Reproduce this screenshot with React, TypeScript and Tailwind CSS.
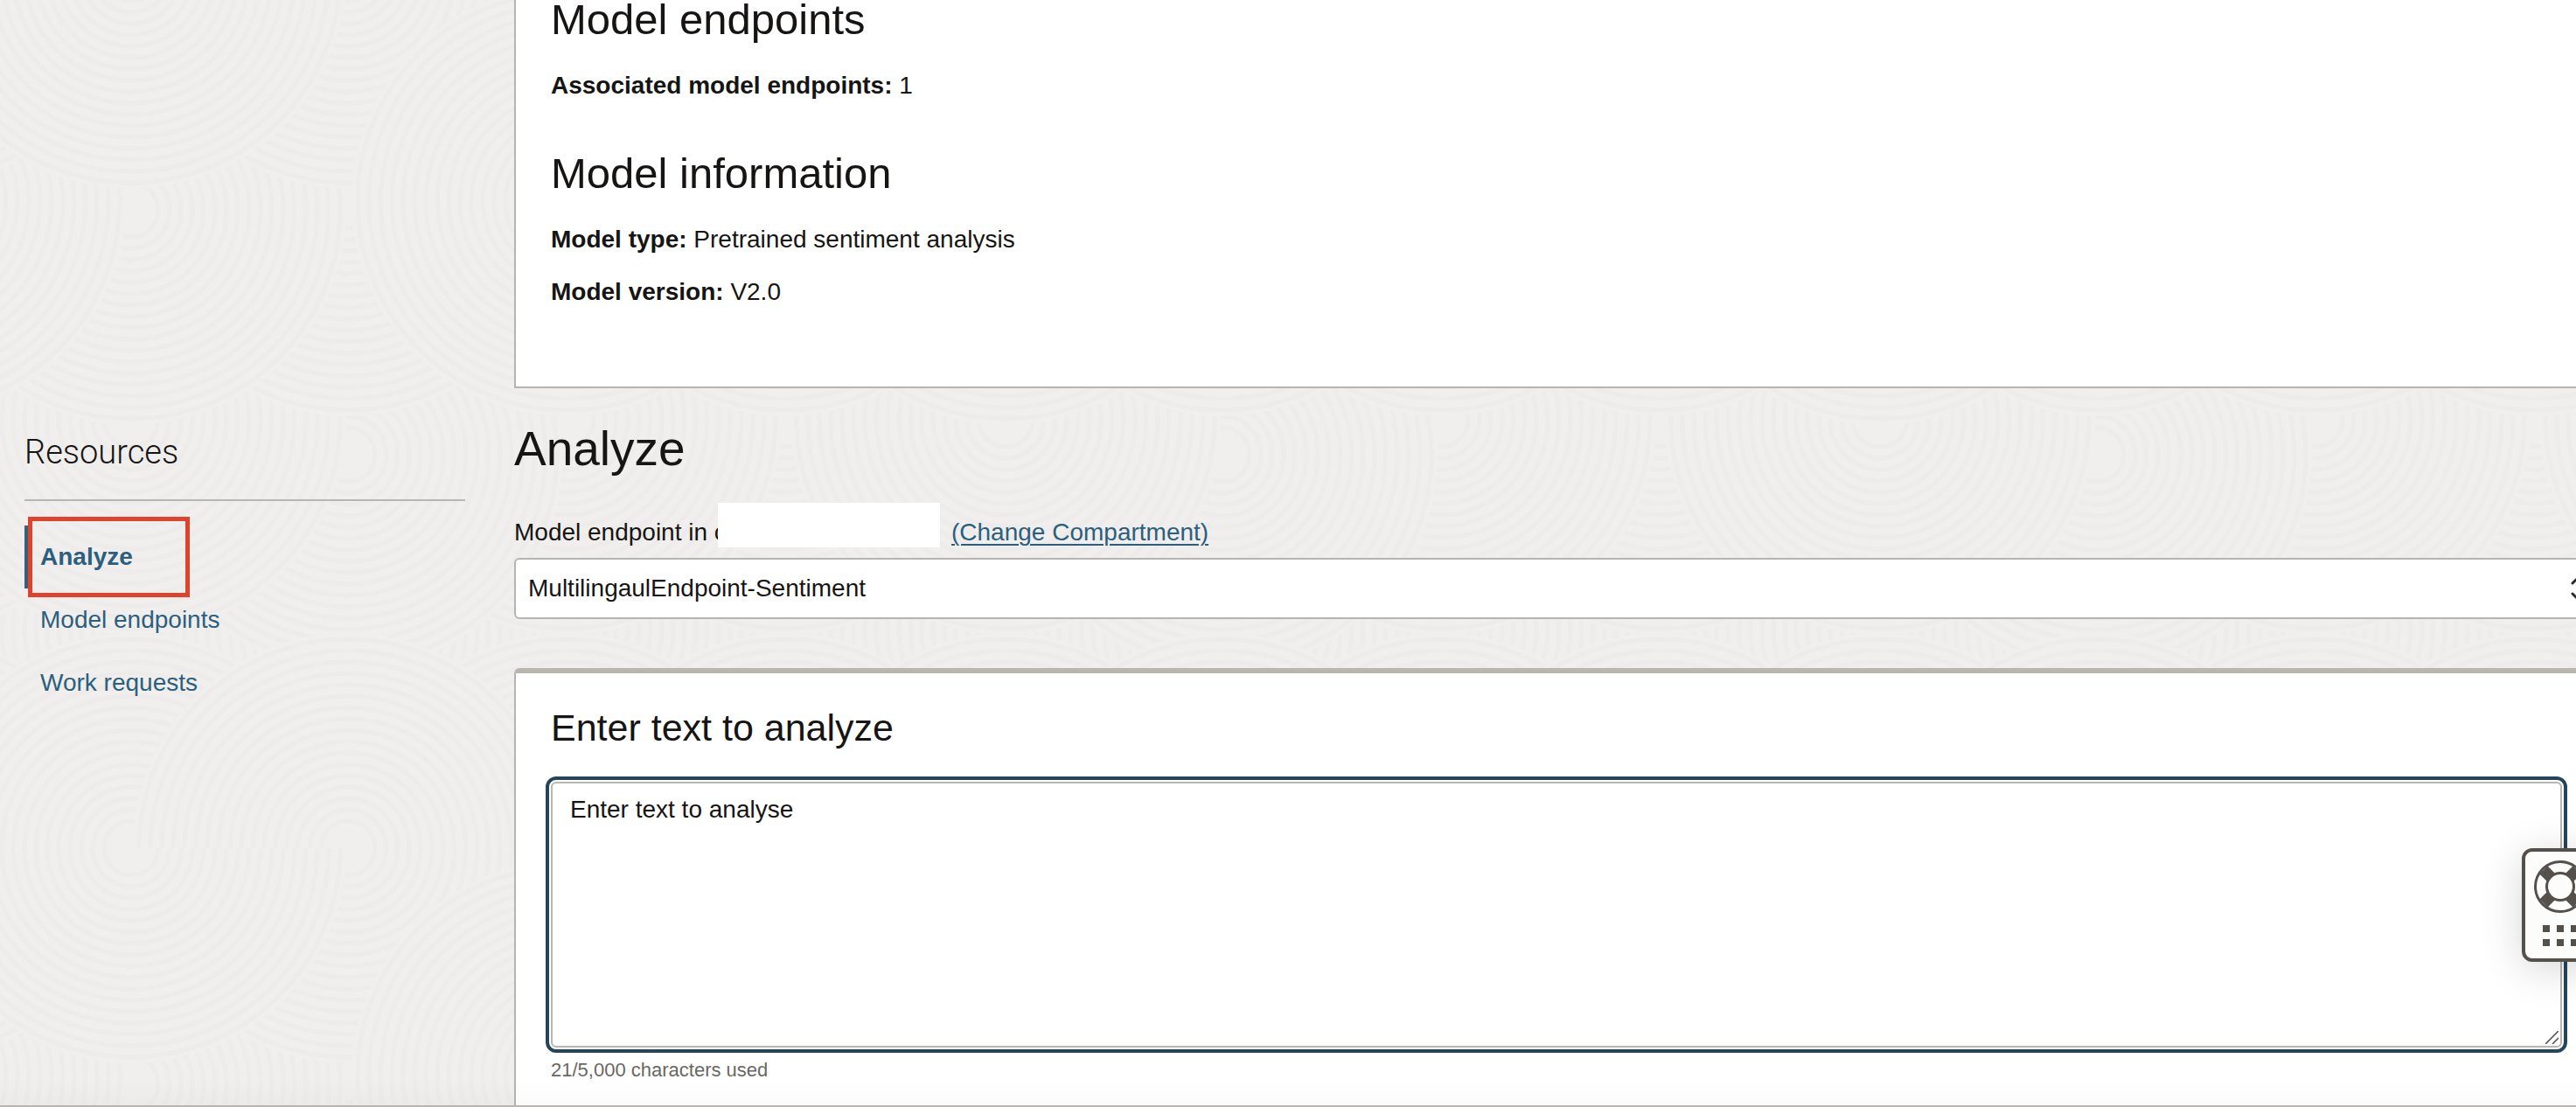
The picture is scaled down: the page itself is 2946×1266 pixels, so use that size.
import React from "react";

const TILE = 1000;
const WRAPS = [-TILE, 0, TILE];
const RADII = [31, 44, 57, 70, 83, 96, 109, 122, 135, 148, 161, 174, 187, 200, 213, 226, 239];

// Ring centres of one tile, bottom layer first.
const CENTRES: [number, number][] = [
  [898, 720],
  [648, 720],
  [150, 720],
  [398, 720],
  [898, 480],
  [648, 480],
  [398, 520],
  [150, 480],
  [398, 230],
  [150, 240],
  [898, 230],
  [648, -30],
  [898, -30],
  [150, -30],
  [398, -30],
  [648, 230],
];

function Rings({ cx, cy }: { cx: number; cy: number }) {
  return (
    <g>
      <circle cx={cx} cy={cy} r={246} fill="#f0efed" />
      {RADII.map((r) => (
        <circle key={r} cx={cx} cy={cy} r={r} fill="none" stroke="#edecea" strokeWidth={5} />
      ))}
    </g>
  );
}

function LowerRings({ cx, cy }: { cx: number; cy: number }) {
  return (
    <g>
      <path d={`M${cx - 246} ${cy}a246 246 0 0 0 492 0z`} fill="#f0efed" />
      {RADII.map((r) => (
        <path key={r} d={`M${cx - r} ${cy}a${r} ${r} 0 0 0 ${2 * r} 0`} fill="none" stroke="#edecea" strokeWidth={5} />
      ))}
    </g>
  );
}

function Backdrop() {
  return (
    <svg className="absolute inset-0 h-full w-full" aria-hidden="true">
      <defs>
        <pattern id="rings" width={TILE} height={TILE} patternUnits="userSpaceOnUse">
          <rect width={TILE} height={TILE} fill="#f0efed" />
          {CENTRES.map(([x, y]) =>
            WRAPS.map((dx) =>
              WRAPS.map((dy) => <Rings key={`${x}-${y}-${dx}-${dy}`} cx={x + dx} cy={y + dy} />),
            ),
          )}
          {WRAPS.map((dy) => (
            <LowerRings key={dy} cx={150} cy={dy - 30} />
          ))}
        </pattern>
      </defs>
      <rect width="100%" height="100%" fill="url(#rings)" />
    </svg>
  );
}

function LifeRing() {
  return (
    <svg className="block h-[60px] w-[60px] shrink-0" viewBox="0 0 60 60" fill="none" aria-hidden="true">
      <circle cx="30" cy="30" r="28.5" stroke="#54514d" strokeWidth="3" />
      <path
        d="M11 11L22 22M49 11L38 22M11 49L22 38M49 49L38 38"
        stroke="#54514d"
        strokeWidth="13"
      />
      <circle cx="30" cy="30" r="15.5" stroke="#54514d" strokeWidth="3" fill="#fcfcfb" />
    </svg>
  );
}

function Field({ label, value }: { label: string; value: string }) {
  return (
    <p className="text-[28px] leading-9">
      <strong className="font-bold">{label}:</strong> {value}
    </p>
  );
}

function Sidebar() {
  return (
    <nav className="w-[504px] shrink-0 pt-[490px]" aria-label="Resources">
      <h2 className="border-b-2 border-[#b9b6b2] pb-[27px] font-['Roboto','Liberation_Sans',sans-serif] text-[38px] leading-[54px] font-light">
        Resources
      </h2>
      <ul className="mt-7 text-[28px] text-[#2c5f7f]">
        <li className="relative">
          <a href="#analyze" className="block border-l-[6px] border-[#35607c] pl-3 leading-[72px] font-bold">
            Analyze
          </a>
          <span className="pointer-events-none absolute -top-[10px] left-1 h-[92px] w-[185px] border-[5px] border-[#e0432b]" />
        </li>
        <li>
          <a href="#endpoints" className="block pl-[18px] leading-[72px]">
            Model endpoints
          </a>
        </li>
        <li>
          <a href="#requests" className="block pl-[18px] leading-[72px]">
            Work requests
          </a>
        </li>
      </ul>
    </nav>
  );
}

export default function App() {
  return (
    <div className="relative flex min-h-screen flex-col overflow-hidden bg-[#f0efed] font-['Liberation_Sans',Arial,sans-serif] text-[#161513]">
      <Backdrop />
      <div className="relative flex grow gap-14 pl-7">
        <Sidebar />
        <main className="-mr-[26px] flex min-w-0 grow flex-col">
          <section className="border-x-2 border-b-2 border-[#b5b4b2] bg-white px-10 pb-[90px]">
            <h2 className="text-[49px] leading-[44px]">Model endpoints</h2>
            <div className="mt-9">
              <Field label="Associated model endpoints" value="1" />
            </div>
            <h2 className="mt-[60px] text-[49px] leading-[44px]">Model information</h2>
            <div className="mt-9 flex flex-col gap-6">
              <Field label="Model type" value="Pretrained sentiment analysis" />
              <Field label="Model version" value="V2.0" />
            </div>
          </section>

          <h1 className="mt-9 text-[55px] leading-[66px]">Analyze</h1>
          <div className="mt-[29px] flex h-[51px] items-end text-[28px] leading-[34px]">
            <label htmlFor="endpoint" className="w-[233px] whitespace-nowrap">
              Model endpoint in c
            </label>
            <span className="relative h-[51px] w-[254px] bg-white" />
            <a href="#compartment" className="ml-[13px] text-[#2c5f7f] underline decoration-2 underline-offset-4">
              (Change Compartment)
            </a>
          </div>
          <div className="relative mt-3">
            <select
              id="endpoint"
              className="block h-[70px] w-full appearance-none rounded-md border-2 border-[#b5b4b2] bg-white px-[14px] text-[28px]"
            >
              <option>MultilingaulEndpoint-Sentiment</option>
            </select>
            <svg
              className="pointer-events-none absolute top-5 right-3 h-[30px] w-5"
              viewBox="0 0 20 30"
              fill="none"
              stroke="#2b2a28"
              strokeWidth="3"
              strokeLinecap="round"
              aria-hidden="true"
            >
              <path d="M2 9L10 1L18 9M2 21L10 29L18 21" />
            </svg>
          </div>

          <section className="mt-14 grow rounded-t-md border-x-2 border-t-[6px] border-x-[#b5b4b2] border-t-[#b9b5b0] bg-white px-10 pt-[35px] pb-[26px]">
            <h2 className="text-[43px] leading-[54px]">
              <label htmlFor="text">Enter text to analyze</label>
            </h2>
            <div className="relative mt-[35px]">
              <textarea
                id="text"
                defaultValue="Enter text to analyse"
                className="block h-[304px] w-full resize-none rounded-md border-2 border-[#b9b5b0] bg-white px-5 py-3 text-[28px] leading-9 outline-4 outline-offset-2 outline-[#25465a]"
              />
              <svg
                className="pointer-events-none absolute right-1 bottom-1 h-[15px] w-[15px]"
                viewBox="0 0 15 15"
                stroke="#4a4a4a"
                strokeWidth="1.5"
                aria-hidden="true"
              >
                <path d="M0 15L15 0M8 15L15 8" />
              </svg>
            </div>
            <p className="mt-3 text-[22px] leading-7 text-[#6a6763]">21/5,000 characters used</p>
          </section>
        </main>
      </div>

      <div className="pointer-events-none absolute inset-x-0 bottom-0 h-8 bg-linear-to-b from-transparent to-black/2" />
      <footer className="relative h-[2px] bg-[#bab5b0]" />

      <button
        type="button"
        aria-label="Help"
        className="absolute top-[970px] -right-[26px] flex h-[130px] w-[88px] flex-col items-center rounded-xl border-4 border-[#54514d] bg-[#fcfcfb] pt-[10px] shadow-[0_8px_48px_rgba(0,0,0,0.16)]"
      >
        <LifeRing />
        <span className="mt-[14px] grid grid-cols-3 gap-2">
          {[0, 1, 2, 3, 4, 5].map((dot) => (
            <span key={dot} className="h-2 w-2 bg-[#54514d]" />
          ))}
        </span>
      </button>
    </div>
  );
}
